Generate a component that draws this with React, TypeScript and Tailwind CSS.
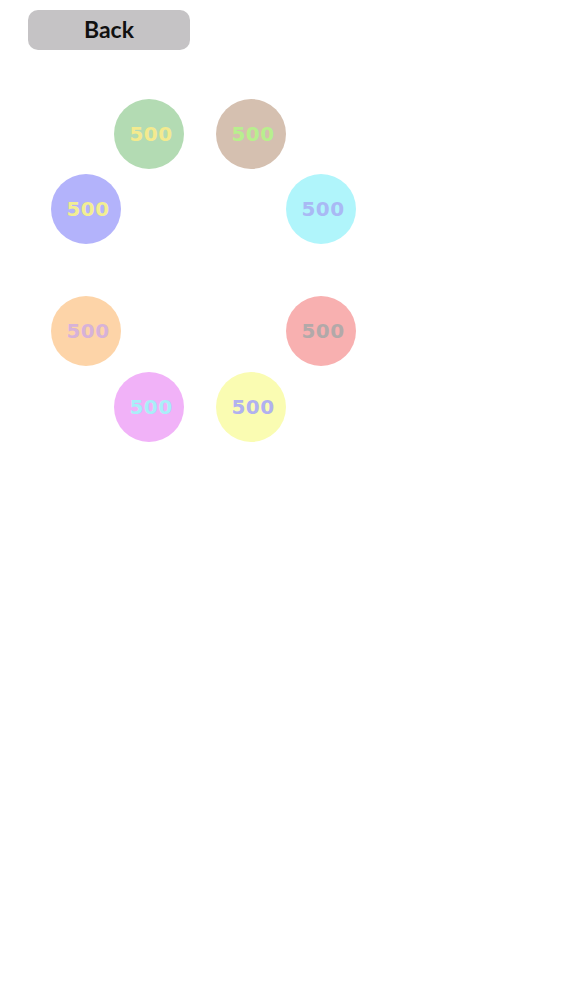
import React from "react";

type Dot = { left: number; top: number; bg: string; fg: string };

const dots: Dot[] = [
  { left: 114, top: 99, bg: "#b3dbb3", fg: "#f3ea8e" },
  { left: 216, top: 99, bg: "#d5c0b0", fg: "#b8ef8e" },
  { left: 51, top: 174, bg: "#b3b3fb", fg: "#f2ee92" },
  { left: 286, top: 174, bg: "#b0f5fb", fg: "#a9b9f4" },
  { left: 51, top: 296, bg: "#fdd4a8", fg: "#d7b2d9" },
  { left: 286, top: 296, bg: "#f8b0b0", fg: "#b2a9a9" },
  { left: 114, top: 372, bg: "#f1b2f8", fg: "#aaeef8" },
  { left: 216, top: 372, bg: "#fafcb2", fg: "#b1b1ef" },
];

export default function App() {
  return (
    <div className="w-[563px] h-[1000px] bg-white relative">
      <div className="pt-[10px] pl-[28px]">
        <button
          className="w-[162px] h-[40px] rounded-[10px] bg-[#c5c3c5] text-[23px] font-bold text-[#111] flex items-center justify-center pb-[1px]"
          style={{ fontFamily: "Lato, 'Noto Sans', sans-serif" }}
        >
          Back
        </button>
      </div>
      {dots.map((d, i) => (
        <div
          key={i}
          className="absolute w-[70px] h-[70px] rounded-full flex items-center justify-center text-[20px] font-bold tracking-[0.5px] pl-[4px]"
          style={{
            left: d.left,
            top: d.top,
            backgroundColor: d.bg,
            color: d.fg,
            fontFamily: "'DejaVu Sans', sans-serif",
          }}
        >
          500
        </div>
      ))}
    </div>
  );
}
